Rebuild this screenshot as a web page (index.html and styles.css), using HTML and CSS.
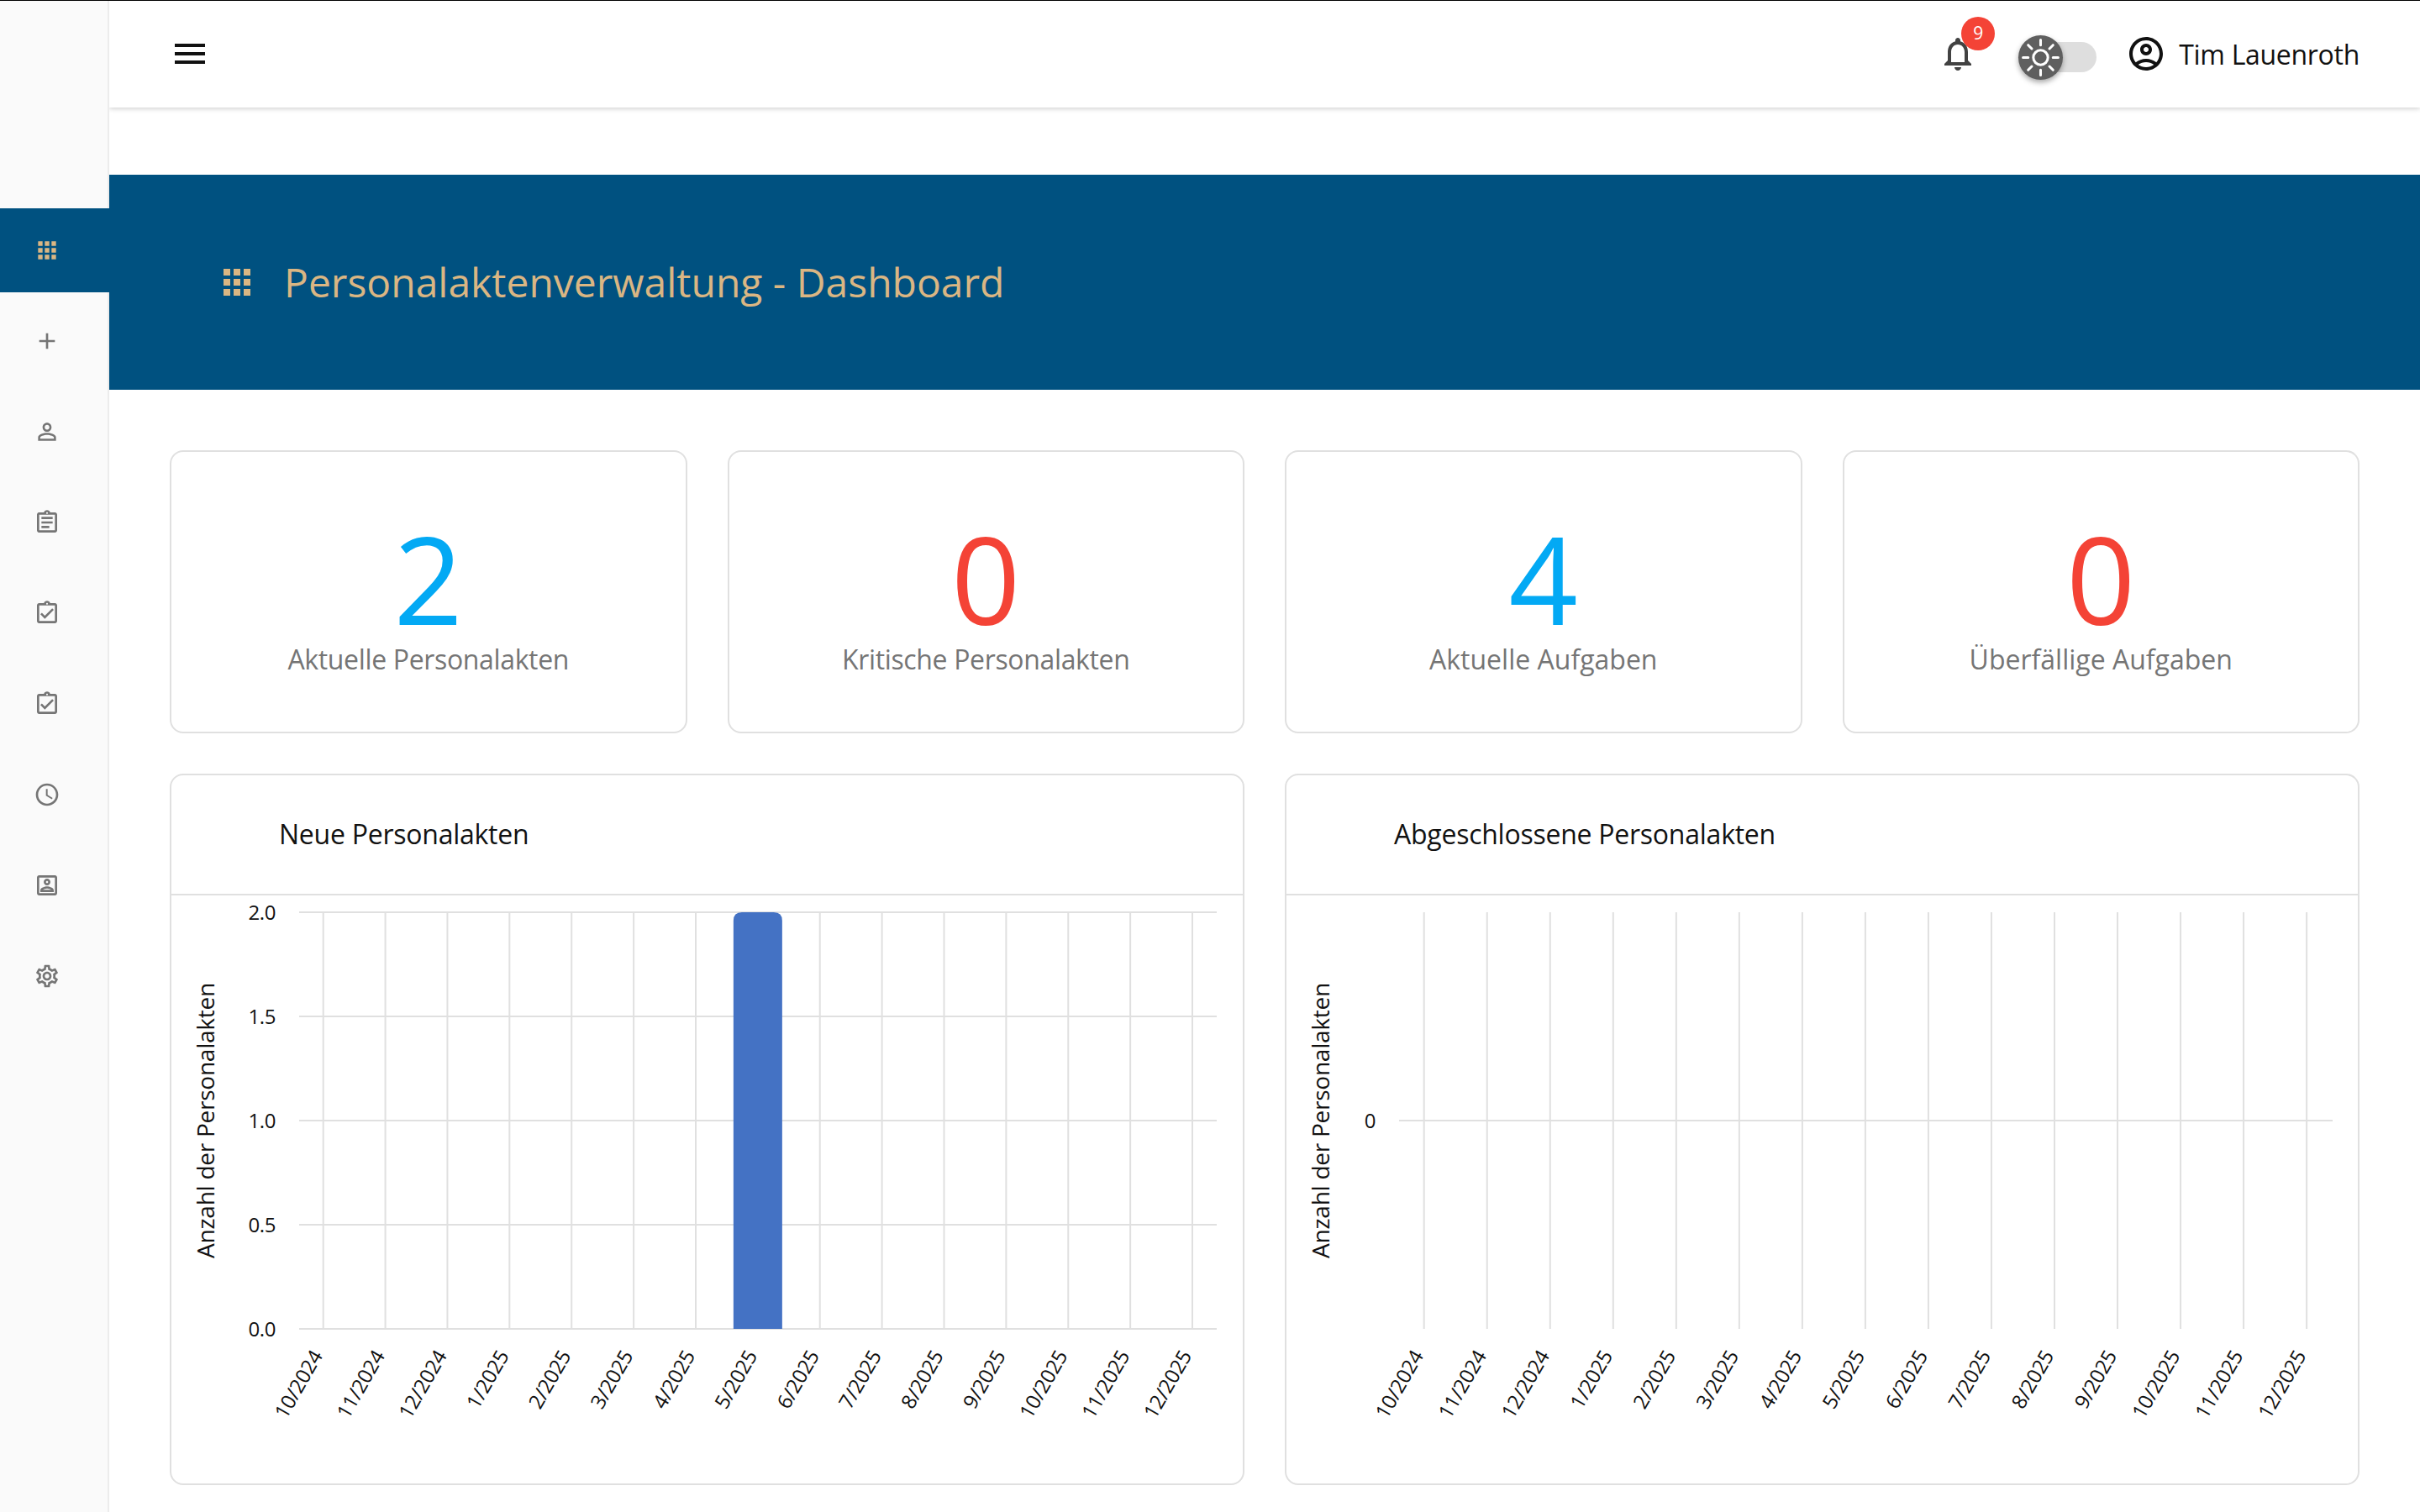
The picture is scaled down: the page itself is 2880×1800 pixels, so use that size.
FILE: index.html
```
<!DOCTYPE html>
<html lang="de">

<head>
    <meta charset="UTF-8">
    <meta name="viewport" content="width=device-width, initial-scale=1.0">
    <title>Personalaktenverwaltung - Dashboard</title>
    <link rel="stylesheet" href="styles.css">
</head>

<body>
    <nav class="sidebar">
        <a class="nav-item active" href="#">
            <svg viewBox="0 0 24 24"><path d="M4 8h4V4H4v4zm6 12h4v-4h-4v4zm-6 0h4v-4H4v4zm0-6h4v-4H4v4zm6 0h4v-4h-4v4zm6-10v4h4V4h-4zm-6 4h4V4h-4v4zm6 6h4v-4h-4v4zm0 6h4v-4h-4v4z"/></svg>
        </a>
        <a class="nav-item" href="#">
            <svg viewBox="0 0 24 24"><path d="M19 13h-6v6h-2v-6H5v-2h6V5h2v6h6v2z"/></svg>
        </a>
        <a class="nav-item" href="#">
            <svg viewBox="0 0 24 24"><path d="M12 5.9c1.16 0 2.1.94 2.1 2.1s-.94 2.1-2.1 2.1S9.9 9.16 9.9 8s.94-2.1 2.1-2.1m0 9c2.97 0 6.1 1.46 6.1 2.1v1.1H5.9V17c0-.64 3.13-2.1 6.1-2.1M12 4C9.79 4 8 5.79 8 8s1.79 4 4 4 4-1.79 4-4-1.79-4-4-4zm0 9c-2.67 0-8 1.34-8 4v3h16v-3c0-2.66-5.33-4-8-4z"/></svg>
        </a>
        <a class="nav-item" href="#">
            <svg viewBox="0 0 24 24"><path d="M7 15h7v2H7zm0-4h10v2H7zm0-4h10v2H7zm12-4h-4.18C14.4 1.84 13.3 1 12 1c-1.3 0-2.4.84-2.82 2H5c-.14 0-.27.01-.4.04-.39.08-.74.28-1.01.55-.18.18-.33.4-.43.64-.1.23-.16.49-.16.77v14c0 .27.06.54.16.78s.25.45.43.64c.27.27.62.47 1.01.55.13.02.26.03.4.03h14c1.1 0 2-.9 2-2V5c0-1.1-.9-2-2-2zm-7-.25c.41 0 .75.34.75.75s-.34.75-.75.75-.75-.34-.75-.75.34-.75.75-.75zM19 19H5V5h14v14z"/></svg>
        </a>
        <a class="nav-item" href="#">
            <svg viewBox="0 0 24 24"><path d="M18 9l-1.4-1.4-6.6 6.6-2.6-2.6L6 13l4 4zm1-6h-4.18C14.4 1.84 13.3 1 12 1c-1.3 0-2.4.84-2.82 2H5c-1.1 0-2 .9-2 2v14c0 1.1.9 2 2 2h14c1.1 0 2-.9 2-2V5c0-1.1-.9-2-2-2zm-7-.25c.41 0 .75.34.75.75s-.34.75-.75.75-.75-.34-.75-.75.34-.75.75-.75zM19 19H5V5h14v14z"/></svg>
        </a>
        <a class="nav-item" href="#">
            <svg viewBox="0 0 24 24"><path d="M18 9l-1.4-1.4-6.6 6.6-2.6-2.6L6 13l4 4zm1-6h-4.18C14.4 1.84 13.3 1 12 1c-1.3 0-2.4.84-2.82 2H5c-1.1 0-2 .9-2 2v14c0 1.1.9 2 2 2h14c1.1 0 2-.9 2-2V5c0-1.1-.9-2-2-2zm-7-.25c.41 0 .75.34.75.75s-.34.75-.75.75-.75-.34-.75-.75.34-.75.75-.75zM19 19H5V5h14v14z"/></svg>
        </a>
        <a class="nav-item" href="#">
            <svg viewBox="0 0 24 24"><path d="M11.99 2C6.47 2 2 6.48 2 12s4.47 10 9.99 10C17.52 22 22 17.52 22 12S17.52 2 11.99 2zM12 20c-4.42 0-8-3.58-8-8s3.58-8 8-8 8 3.58 8 8-3.58 8-8 8zm.5-13H11v6l5.25 3.15.75-1.23-4.5-2.67z"/></svg>
        </a>
        <a class="nav-item" href="#">
            <svg viewBox="0 0 24 24"><path d="M19 5v14H5V5h14m0-2H5c-1.11 0-2 .9-2 2v14c0 1.1.89 2 2 2h14c1.1 0 2-.9 2-2V5c0-1.1-.9-2-2-2zm-7 9c-1.65 0-3-1.35-3-3s1.35-3 3-3 3 1.35 3 3-1.35 3-3 3zm0-4c-.55 0-1 .45-1 1s.45 1 1 1 1-.45 1-1-.45-1-1-1zm6 10H6v-1.53c0-2.5 3.97-3.58 6-3.58s6 1.08 6 3.58V18zm-9.69-2h7.38c-.69-.56-2.38-1.12-3.69-1.12s-3.01.56-3.69 1.12z"/></svg>
        </a>
        <a class="nav-item" href="#">
            <svg viewBox="0 0 24 24"><path d="M19.43 12.98c.04-.32.07-.64.07-.98 0-.34-.03-.66-.07-.98l2.11-1.65c.19-.15.24-.42.12-.64l-2-3.46c-.09-.16-.26-.25-.44-.25-.06 0-.12.01-.17.03l-2.49 1c-.52-.4-1.08-.73-1.69-.98l-.38-2.65C14.46 2.18 14.25 2 14 2h-4c-.25 0-.46.18-.49.42l-.38 2.65c-.61.25-1.17.59-1.69.98l-2.49-1c-.06-.02-.12-.03-.18-.03-.17 0-.34.09-.43.25l-2 3.46c-.13.22-.07.49.12.64l2.11 1.65c-.04.32-.07.65-.07.98 0 .33.03.66.07.98l-2.11 1.65c-.19.15-.24.42-.12.64l2 3.46c.09.16.26.25.44.25.06 0 .12-.01.17-.03l2.49-1c.52.4 1.08.73 1.69.98l.38 2.65c.03.24.24.42.49.42h4c.25 0 .46-.18.49-.42l.38-2.65c.61-.25 1.17-.59 1.69-.98l2.49 1c.06.02.12.03.18.03.17 0 .34-.09.43-.25l2-3.46c.12-.22.07-.49-.12-.64l-2.11-1.65zm-1.98-1.71c.04.31.05.52.05.73 0 .21-.02.43-.05.73l-.14 1.13.89.7 1.08.84-.7 1.21-1.27-.51-1.04-.42-.9.68c-.43.32-.84.56-1.25.73l-1.06.43-.16 1.13-.2 1.35h-1.4l-.19-1.35-.16-1.13-1.06-.43c-.43-.18-.83-.41-1.23-.71l-.91-.7-1.06.43-1.27.51-.7-1.21 1.08-.84.89-.7-.14-1.13c-.03-.31-.05-.54-.05-.74s.02-.43.05-.73l.14-1.13-.89-.7-1.08-.84.7-1.21 1.27.51 1.04.42.9-.68c.43-.32.84-.56 1.25-.73l1.06-.43.16-1.13.2-1.35h1.39l.19 1.35.16 1.13 1.06.43c.43.18.83.41 1.23.71l.91.7 1.06-.43 1.27-.51.7 1.21-1.07.85-.89.7.14 1.13zM12 8c-2.21 0-4 1.79-4 4s1.79 4 4 4 4-1.79 4-4-1.79-4-4-4zm0 6c-1.1 0-2-.9-2-2s.9-2 2-2 2 .9 2 2-.9 2-2 2z"/></svg>
        </a>
    </nav>

    <div class="page">
        <header class="topbar">
            <svg class="icon" viewBox="0 0 24 24"><path d="M3 18h18v-2H3v2zm0-5h18v-2H3v2zm0-7v2h18V6H3z"/></svg>
            <div class="topbar-right">
                <div class="notifications">
                    <svg class="icon" viewBox="0 0 24 24"><path d="M12 22c1.1 0 2-.9 2-2h-4c0 1.1.9 2 2 2zm6-6v-5c0-3.07-1.63-5.64-4.5-6.32V4c0-.83-.67-1.5-1.5-1.5s-1.5.67-1.5 1.5v.68C7.64 5.36 6 7.92 6 11v5l-2 2v1h16v-1l-2-2zm-2 1H8v-6c0-2.48 1.51-4.5 4-4.5s4 2.02 4 4.5v6z"/></svg>
                    <span class="badge">9</span>
                </div>
                <div class="toggle">
                    <div class="thumb">
                        <svg viewBox="0 0 52 52">
                            <circle cx="26" cy="26" r="8.5"/>
                            <path d="M26 5.5v6M26 40.5v6M5.5 26h6M40.5 26h6M11.5 11.5l4.2 4.2M36.3 36.3l4.2 4.2M11.5 40.5l4.2-4.2M36.3 15.7l4.2-4.2"/>
                        </svg>
                    </div>
                </div>
                <div class="user">
                    <svg class="icon" viewBox="0 0 24 24"><path d="M12 2C6.48 2 2 6.48 2 12s4.48 10 10 10 10-4.48 10-10S17.52 2 12 2zM7.35 18.5C8.66 17.56 10.26 17 12 17s3.34.56 4.65 1.5c-1.31.94-2.91 1.5-4.65 1.5s-3.34-.56-4.65-1.5zm10.79-1.38C16.45 15.8 14.32 15 12 15s-4.45.8-6.14 2.12C4.7 15.73 4 13.95 4 12c0-4.42 3.58-8 8-8s8 3.58 8 8c0 1.95-.7 3.73-1.86 5.12zM12 6c-1.93 0-3.5 1.57-3.5 3.5S10.07 13 12 13s3.5-1.57 3.5-3.5S13.93 6 12 6zm0 5c-.83 0-1.5-.67-1.5-1.5S11.17 8 12 8s1.5.67 1.5 1.5S12.83 11 12 11z"/></svg>
                    <span>Tim Lauenroth</span>
                </div>
            </div>
        </header>

        <div class="hero">
            <svg class="icon" viewBox="0 0 24 24"><path d="M4 8h4V4H4v4zm6 12h4v-4h-4v4zm-6 0h4v-4H4v4zm0-6h4v-4H4v4zm6 0h4v-4h-4v4zm6-10v4h4V4h-4zm-6 4h4V4h-4v4zm6 6h4v-4h-4v4zm0 6h4v-4h-4v4z"/></svg>
            <h1>Personalaktenverwaltung - Dashboard</h1>
        </div>

        <main class="content">
            <div class="stats">
                <div class="card stat">
                    <div class="number blue">2</div>
                    <div class="label">Aktuelle Personalakten</div>
                </div>
                <div class="card stat">
                    <div class="number red">0</div>
                    <div class="label">Kritische Personalakten</div>
                </div>
                <div class="card stat">
                    <div class="number blue">4</div>
                    <div class="label wide">Aktuelle Aufgaben</div>
                </div>
                <div class="card stat">
                    <div class="number red">0</div>
                    <div class="label wide">Überfällige Aufgaben</div>
                </div>
            </div>

            <div class="charts">
                <div class="card chart">
                    <h2>Neue Personalakten</h2>
                    <svg id="chart-new" viewBox="0 0 1275 700"></svg>
                </div>
                <div class="card chart">
                    <h2>Abgeschlossene Personalakten</h2>
                    <svg id="chart-closed" viewBox="0 0 1275 700"></svg>
                </div>
            </div>
        </main>
    </div>

    <script src="script.js"></script>
</body>

</html>
```
FILE: styles.css
```
* {
    box-sizing: border-box;
}

body {
    margin: 0;
    height: 1800px;
    display: flex;
    overflow: hidden;
    background-color: #fff;
    border-top: 1px solid #000;
    font-family: "Open Sans", "Noto Sans", sans-serif;
    font-size: 32px;
    color: #111;
}

svg {
    display: block;
    fill: currentColor;
}

.icon {
    width: 48px;
    height: 48px;
}

/* Sidebar */
.sidebar {
    position: relative;
    z-index: 1;
    width: 130px;
    flex-shrink: 0;
    display: flex;
    flex-direction: column;
    gap: 8px;
    padding-top: 247px;
    background: linear-gradient(to right, #fafafa 128px, #ececec 128px);
}

.nav-item {
    height: 100px;
    padding-left: 40px;
    display: flex;
    align-items: center;
    color: #757575;
}

.nav-item svg {
    width: 32px;
    height: 32px;
}

.nav-item.active {
    background-color: #005180;
    color: #dab683;
}

.page {
    flex: 1;
}

/* Top bar */
.topbar {
    height: 127px;
    padding: 0 72px 1px;
    display: flex;
    align-items: center;
    justify-content: space-between;
    box-shadow: 0 1px 6px rgba(0, 0, 0, 0.22);
}

.topbar-right {
    display: flex;
    align-items: center;
}

.notifications {
    position: relative;
    margin-right: 48px;
    color: #424242;
}

.badge {
    position: absolute;
    top: -20px;
    left: 28px;
    width: 40px;
    height: 40px;
    border-radius: 50%;
    background-color: #f44336;
    color: #fff;
    font-size: 21px;
    line-height: 39px;
    text-align: center;
}

.toggle {
    width: 88px;
    height: 36px;
    margin: 8px 35px 0 5px;
    display: flex;
    align-items: center;
    border-radius: 18px;
    background-color: #dedede;
}

.thumb {
    width: 53px;
    height: 53px;
    flex-shrink: 0;
    margin-left: -5px;
    border-radius: 50%;
    background-color: #5f5f5f;
    box-shadow: 0 3px 6px rgba(0, 0, 0, 0.35);
}

.thumb svg {
    fill: none;
    stroke: #fff;
    stroke-width: 3;
    stroke-linecap: round;
}

.user {
    display: flex;
    align-items: center;
    gap: 15px;
    letter-spacing: -0.3px;
}

/* Hero */
.hero {
    height: 256px;
    margin-top: 80px;
    padding-left: 128px;
    display: flex;
    align-items: center;
    gap: 32px;
    background-color: #005180;
    color: #dab683;
}

.hero h1 {
    margin: 0;
    padding-bottom: 2px;
    font-size: 48px;
    font-weight: 400;
}

/* Cards */
.content {
    padding: 72px;
    display: flex;
    flex-direction: column;
    gap: 48px;
}

.card {
    border: 2px solid #e0e0e0;
    border-radius: 16px;
}

.stats {
    display: grid;
    grid-template-columns: repeat(4, 1fr);
    gap: 48px;
}

.stat {
    height: 337px;
    padding-top: 78px;
    text-align: center;
}

.number {
    font-size: 144px;
    line-height: 144px;
}

.blue {
    color: #03a9f4;
}

.red {
    color: #f44336;
}

.label {
    line-height: 49px;
    letter-spacing: -0.35px;
    color: #757575;
}

.label.wide {
    letter-spacing: 0;
}

/* Charts */
.charts {
    display: grid;
    grid-template-columns: repeat(2, 1fr);
    gap: 48px;
}

.chart h2 {
    margin: 0;
    height: 143px;
    padding-left: 128px;
    border-bottom: 2px solid #e0e0e0;
    font-size: 32px;
    font-weight: 400;
    line-height: 140px;
    letter-spacing: -0.25px;
}

.chart svg {
    width: 100%;
    height: 700px;
}

.grid-line {
    stroke: #e0e0e0;
    stroke-width: 2;
}

.bar {
    fill: #4472c4;
}

.axis-label {
    font-size: 24px;
    letter-spacing: -0.4px;
    text-anchor: end;
}

.axis-title {
    font-size: 28px;
    letter-spacing: -0.25px;
    text-anchor: middle;
}
```
FILE: script.js
```
const months = [
    "10/2024", "11/2024", "12/2024", "1/2025", "2/2025", "3/2025", "4/2025", "5/2025",
    "6/2025", "7/2025", "8/2025", "9/2025", "10/2025", "11/2025", "12/2025"
];
const plotTop = 20;
const plotBottom = 516;

function add(svg, tag, attrs, text) {
    const el = document.createElementNS("http://www.w3.org/2000/svg", tag);
    for (const key in attrs) el.setAttribute(key, attrs[key]);
    if (text) el.textContent = text;
    svg.appendChild(el);
}

function drawChart(id, options) {
    const svg = document.getElementById(id);
    const { left, right, first, step, rows, bars } = options;

    months.forEach((month, i) => {
        const x = first + i * step;
        add(svg, "line", { class: "grid-line", x1: x, x2: x, y1: plotTop, y2: plotBottom });
        add(svg, "text", { class: "axis-label", transform: `translate(${x} 548) rotate(-60)` }, month);
    });

    rows.forEach(([label, y]) => {
        add(svg, "line", { class: "grid-line", x1: left, x2: right, y1: y, y2: y });
        add(svg, "text", { class: "axis-label", x: left - 28, y: y + 8.5 }, label);
    });

    // value 2 fills the full plot height
    bars.forEach(([index, value]) => {
        const x = first + index * step - 29;
        const y = plotBottom - (plotBottom - plotTop) * value / 2;
        add(svg, "path", { class: "bar", d: `M${x} ${plotBottom}V${y + 10}q0 -10 10 -10h38q10 0 10 10V${plotBottom}z` });
    });

    add(svg, "text", { class: "axis-title", transform: "translate(50.5 268) rotate(-90)" }, "Anzahl der Personalakten");
}

drawChart("chart-new", {
    left: 152, right: 1244, first: 180.7, step: 73.88,
    rows: [["2.0", 20], ["1.5", 144], ["1.0", 268], ["0.5", 392], ["0.0", 516]],
    bars: [[7, 2]]
});

drawChart("chart-closed", {
    left: 134, right: 1245, first: 163.7, step: 75.03,
    rows: [["0", 268]],
    bars: []
});
```
